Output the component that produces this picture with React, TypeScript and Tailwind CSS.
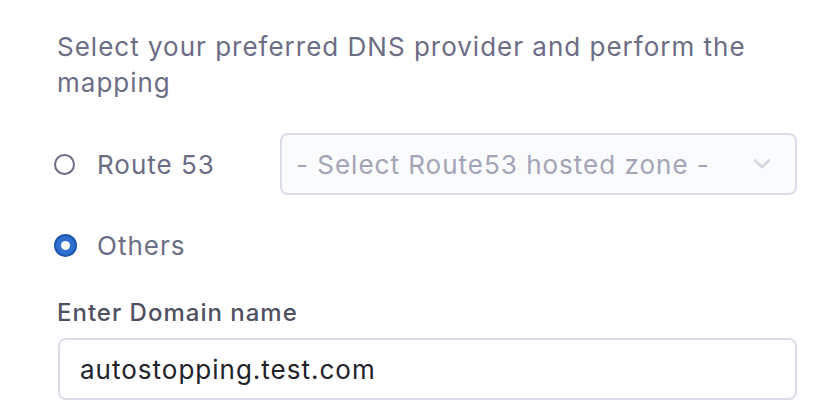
import React from "react";

export default function App() {
  return (
    <div
      className="w-[814px] h-[420px] bg-white overflow-hidden pl-[57px] pr-[17px] pt-[29px] tracking-[1px]"
      style={{ fontFamily: "Inter, 'Noto Sans', sans-serif" }}
    >
      <p className="text-[26px] leading-[36px] text-[#6b6d85] pr-[20px]">
        Select your preferred DNS provider and perform the mapping
      </p>
      <div className="mt-[32px] -ml-[3px] flex items-center h-[62px]">
        <div className="w-[226px] flex items-center">
          <span className="w-[21px] h-[21px] rounded-full border-2 border-[#6b6d85] bg-white shrink-0"></span>
          <span className="ml-[22px] text-[26px] text-[#6b6d85]">Route 53</span>
        </div>
        <div className="flex-1 h-[62px] rounded-[8px] border-2 border-[#dcdde8] bg-[#fafbfc] flex items-center justify-between pl-[14px] pr-[24px]">
          <span className="text-[26px] text-[#a3a4b8]">- Select Route53 hosted zone -</span>
          <svg width="18" height="12" viewBox="0 0 18 12" fill="none">
            <path d="M2 2.5 L9 9 L16 2.5" stroke="#d5d6e0" strokeWidth="2.6" strokeLinecap="round" strokeLinejoin="round" />
          </svg>
        </div>
      </div>
      <div className="mt-[30px] -ml-[3px] flex items-center h-[40px]">
        <span className="w-[23px] h-[23px] rounded-full bg-[#2e6fd0] border-[2px] border-[#1d56ad] flex items-center justify-center shrink-0">
          <span className="w-[9px] h-[9px] rounded-full bg-white"></span>
        </span>
        <span className="ml-[20px] text-[26px] text-[#6b6d85]">Others</span>
      </div>
      <div className="mt-[33px] text-[24px] font-medium text-[#4f5162] leading-[30px]">Enter Domain name</div>
      <div className="mt-[10px] ml-px h-[62px] rounded-[8px] border-2 border-[#dcdde8] bg-white flex items-center pl-[20px]">
        <span className="text-[26px] text-[#22222a]">autostopping.test.com</span>
      </div>
    </div>
  );
}
